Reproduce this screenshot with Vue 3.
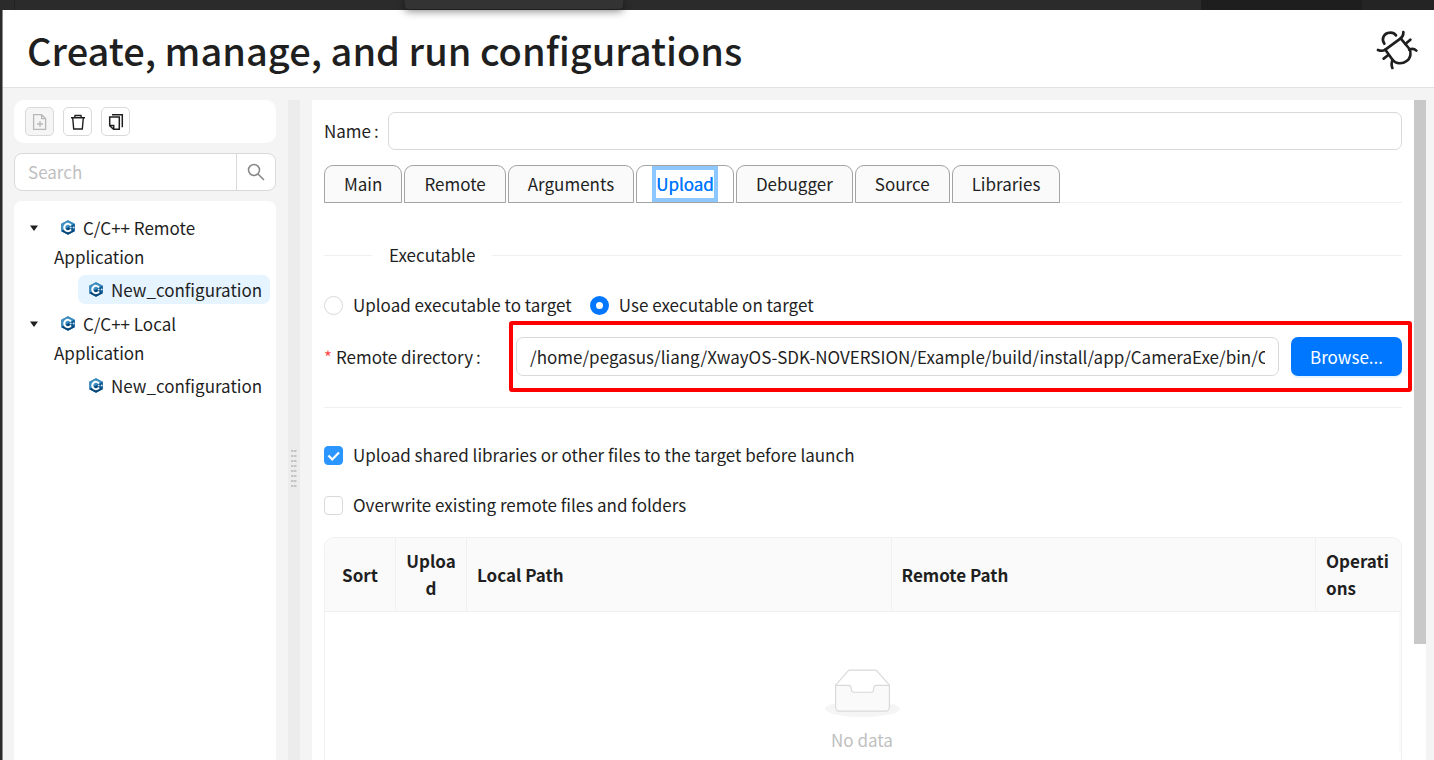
<script setup>
import { ref } from 'vue'

const tabs = ['Main', 'Remote', 'Arguments', 'Upload', 'Debugger', 'Source', 'Libraries']
const activeTab = ref('Upload')
const tree = [
  { label: 'C/C++ Remote Application', child: 'New_configuration', selected: true },
  { label: 'C/C++ Local Application', child: 'New_configuration', selected: false }
]
const search = ref('')
const name = ref('')
const mode = ref('use')
const remoteDir = ref('/home/pegasus/liang/XwayOS-SDK-NOVERSION/Example/build/install/app/CameraExe/bin/CameraExe')
const uploadLibs = ref(true)
const overwrite = ref(false)
</script>

<template>
  <div class="window">
    <div class="strip">
      <span class="strip-left"></span>
      <span class="strip-tab"></span>
      <span class="strip-right"></span>
      <span class="strip-dark"></span>
      <span class="strip-end"></span>
    </div>
    <div class="dialog">
      <header class="header">
        <h1>Create, manage, and run configurations</h1>
        <svg class="bug" viewBox="126 87 126 126" fill="none" stroke="#1f1f1f" stroke-width="8" stroke-linecap="round" stroke-linejoin="round">
          <path d="M151 131C141 118 149 99 168 98Q179 97 186 106" />
          <path d="M154 149L200 115L224 144C233 156 231 174 218 183C205 193 186 192 176 180Z" />
          <path d="M200 115Q209 108 208 96M214 132L229 119M226 149Q238 143 247 152M154 149Q145 155 132 150M163 165L149 176M176 180Q170 190 175 204" />
        </svg>
      </header>

      <div class="body">
        <aside class="sidebar">
          <div class="toolbar">
            <button class="tool" disabled aria-label="New configuration">
              <svg viewBox="0 0 18 18" fill="none" stroke="#b8b8b8" stroke-width="1.3"><path d="M2.6 1.6h8l4 4v10.800h-12zM10.600 1.600v4h4M9 8v6M6 11h6" /></svg>
            </button>
            <button class="tool" aria-label="Delete">
              <svg viewBox="0 0 18 18" fill="none" stroke="#1f1f1f" stroke-width="1.400"><path d="M2 4.700h14M5.600 4.500l.5-2h5.800l.5 2M3.700 5l1 11h8.600l1-11" /></svg>
            </button>
            <button class="tool" aria-label="Duplicate">
              <svg viewBox="0 0 18 18" fill="none" stroke="#1f1f1f" stroke-width="1.500"><path d="M5 1.700h10.300v12.600M2.700 4h9.600v12.300H6.500l-3.800-3.600zM3 12.500h3.700v3.600" /></svg>
            </button>
          </div>

          <div class="search">
            <input v-model="search" type="text" placeholder="Search" aria-label="Search" />
            <button aria-label="Run search">
              <svg viewBox="0 0 18 18" fill="none" stroke="#858585" stroke-width="1.500"><circle cx="7" cy="7" r="5.500" /><path d="M11 11l6 6" /></svg>
            </button>
          </div>

          <ul class="tree">
            <li v-for="node in tree" :key="node.label" class="branch">
              <svg class="caret" viewBox="0 0 8 6"><path d="M0 0.500h8L4 6z" fill="#1f1f1f" /></svg>
              <div class="branch-body">
                <span class="branch-label">
                  <svg class="cpp" viewBox="0 0 42 44"><path d="M21 0L41 11V33L21 44L1 33V11z" fill="#1265a0" /><path d="M21 0L41 11L21 22L1 33V11z" fill="#3f90c2" /><path d="M21 22L41 11V33z" fill="#0e5a94" /><path d="M1 33L21 22L41 33L21 44z" fill="#084878" /><path d="M30 16a11 11 0 1 0 0 12" fill="none" stroke="#fff" stroke-width="6" /><path d="M26 22h6M29 19v6M35 22h6M38 19v6" stroke="#fff" stroke-width="2" /></svg>{{ node.label }}</span>
                <a href="#" class="leaf" :class="{ selected: node.selected }" @click.prevent>
                  <svg class="cpp" viewBox="0 0 42 44"><path d="M21 0L41 11V33L21 44L1 33V11z" fill="#1265a0" /><path d="M21 0L41 11L21 22L1 33V11z" fill="#3f90c2" /><path d="M21 22L41 11V33z" fill="#0e5a94" /><path d="M1 33L21 22L41 33L21 44z" fill="#084878" /><path d="M30 16a11 11 0 1 0 0 12" fill="none" stroke="#fff" stroke-width="6" /><path d="M26 22h6M29 19v6M35 22h6M38 19v6" stroke="#fff" stroke-width="2" /></svg>{{ node.child }}</a>
              </div>
            </li>
          </ul>
        </aside>

        <div class="splitter"><span class="grip"></span></div>

        <main class="panel">
          <div class="content">
            <div class="name-row">
              <label for="name">Name<span class="colon">:</span></label>
              <input id="name" v-model="name" class="field" type="text" />
            </div>

            <div class="tabs" role="tablist">
              <button
                v-for="tab in tabs"
                :key="tab"
                class="tab"
                :class="{ active: tab === activeTab }"
                role="tab"
                :aria-selected="tab === activeTab"
                @click="activeTab = tab"
              ><span>{{ tab }}</span></button>
            </div>

            <div class="section-title"><span>Executable</span></div>

            <div class="options">
              <label class="option"><input v-model="mode" type="radio" name="mode" value="upload" />Upload executable to target</label>
              <label class="option"><input v-model="mode" type="radio" name="mode" value="use" />Use executable on target</label>
            </div>

            <div class="dir-row">
              <label for="remote-dir"><span class="required">*</span>Remote directory<span class="colon">:</span></label>
              <div class="dir-controls">
                <input id="remote-dir" v-model="remoteDir" class="field" type="text" />
                <button class="primary">Browse...</button>
              </div>
            </div>

            <hr />

            <label class="option check"><input v-model="uploadLibs" type="checkbox" /><svg v-if="uploadLibs" class="tick" viewBox="0 0 19 19" fill="none" stroke="#fff" stroke-width="2.200"><path d="M4.500 9.500l3.700 4L15 6.500" /></svg>Upload shared libraries or other files to the target before launch</label>
            <label class="option check"><input v-model="overwrite" type="checkbox" />Overwrite existing remote files and folders</label>

            <div class="table-wrap">
              <table>
                <colgroup><col class="c-small" /><col class="c-small" /><col /><col /><col class="c-ops" /></colgroup>
                <thead>
                  <tr><th class="center">Sort</th><th class="center">Upload</th><th>Local Path</th><th>Remote Path</th><th>Operations</th></tr>
                </thead>
                <tbody>
                  <tr>
                    <td colspan="5">
                      <div class="empty">
                        <svg viewBox="0 0 64 41"><g transform="translate(0 1)" fill="none"><ellipse fill="#f5f5f5" cx="32" cy="33" rx="32" ry="7" /><g stroke="#d9d9d9"><path d="M55 12.760L44.854 1.258C44.367.474 43.656 0 42.907 0H21.093c-.749 0-1.460.474-1.947 1.257L9 12.761V22h46v-9.240z" /><path d="M41.613 15.931c0-1.605.994-2.930 2.227-2.931H55v18.137C55 33.260 53.680 35 52.050 35h-40.100C10.320 35 9 33.259 9 31.137V13h11.160c1.233 0 2.227 1.323 2.227 2.928v.022c0 1.605 1.005 2.901 2.237 2.901h14.752c1.232 0 2.237-1.308 2.237-2.913v-.007z" fill="#fafafa" /></g></g></svg>
                        <span>No data</span>
                      </div>
                    </td>
                  </tr>
                </tbody>
              </table>
            </div>
          </div>
          <div class="scroll"><span></span></div>
        </main>
      </div>
    </div>
  </div>
</template>

<style>
body {
  margin: 0;
  overflow: hidden;
}
</style>

<style scoped>
* {
  box-sizing: border-box;
}
.window {
  height: 100vh;
  display: flex;
  flex-direction: column;
  font-family: "Noto Sans CJK SC", "Noto Sans", sans-serif;
  font-size: 17px;
  line-height: 28px;
  color: #1f1f1f;
  background: #2b2b2b;
}
input,
button {
  font: inherit;
  color: inherit;
  margin: 0;
}
svg {
  display: block;
}
.strip {
  display: flex;
  height: 10px;
  flex: none;
  position: relative;
  z-index: 1;
}
.strip-left {
  width: 28%;
}
.strip-left::before {
  content: "";
  display: block;
  width: 14px;
  height: 100%;
  border-right: 1px solid #222;
}
.strip-tab {
  width: 218px;
  height: 9px;
  margin-left: 3px;
  background: #333;
  border-radius: 0 0 4px 4px;
  box-shadow: 0 2px 8px rgba(0, 0, 0, 0.5);
}
.strip-right {
  flex: 1;
}
.strip-dark {
  width: 161px;
  background: #1e1e1e;
}
.strip-end {
  width: 72px;
  background: #242424;
}
.dialog {
  flex: 1;
  min-height: 0;
  margin-left: 2px;
  border-left: 1px solid #8c8c8c;
  background: #f4f4f4;
  display: flex;
  flex-direction: column;
}
.header {
  flex: none;
  display: flex;
  align-items: center;
  justify-content: space-between;
  height: 78px;
  padding: 2px 16px 0 24px;
  background: #fff;
  border-bottom: 1px solid #e2e2e2;
}
h1 {
  margin: 0;
  font-size: 38px;
  line-height: 60px;
  font-weight: 500;
}
.bug {
  width: 42px;
  height: 42px;
}
.body {
  flex: 1;
  min-height: 0;
  display: flex;
  gap: 12px;
  padding: 12px 8px 0 11px;
}
.sidebar {
  width: 262px;
  flex: none;
  display: flex;
  flex-direction: column;
  gap: 10px;
}
.toolbar {
  display: flex;
  gap: 9px;
  padding: 7px 11px;
  background: #fff;
  border-radius: 10px;
}
.tool {
  width: 29px;
  height: 29px;
  padding: 0;
  display: flex;
  align-items: center;
  justify-content: center;
  background: #fff;
  border: 1px solid #d9d9d9;
  border-radius: 5px;
}
.tool:disabled {
  background: #f5f5f5;
}
.tool svg {
  width: 18px;
  height: 18px;
}
.search {
  display: flex;
  height: 38px;
  background: #fff;
  border: 1px solid #d9d9d9;
  border-radius: 8px;
}
.search input {
  flex: 1;
  min-width: 0;
  border: 0;
  padding: 0 13px;
  background: none;
  outline: none;
}
.search input::placeholder {
  color: #bfbfbf;
}
.search button {
  width: 39px;
  padding: 0;
  display: flex;
  align-items: center;
  justify-content: center;
  background: none;
  border: 0;
  border-left: 1px solid #d9d9d9;
}
.search svg {
  width: 18px;
  height: 18px;
}
.tree {
  flex: 1;
  list-style: none;
  margin: 0;
  padding: 12px 6px 0 16px;
  background: #fff;
  border-radius: 8px 8px 0 0;
  line-height: 29px;
}
.branch {
  display: flex;
  gap: 16px;
  margin-bottom: 5px;
}
.caret {
  width: 8px;
  height: 6px;
  flex: none;
  margin-top: 12px;
}
.branch-body {
  flex: 1;
  min-width: 0;
  display: flex;
  flex-direction: column;
  gap: 4px;
}
.branch-label {
  width: 160px;
}
.cpp {
  display: inline-block;
  width: 14px;
  height: 15px;
  margin: 0 8px 0 7px;
}
.leaf {
  margin-left: 24px;
  padding-left: 4px;
  white-space: nowrap;
  color: inherit;
  text-decoration: none;
  border-radius: 7px;
}
.leaf.selected {
  background: #e6f4ff;
}
.splitter {
  width: 12px;
  flex: none;
  display: flex;
  align-items: center;
  justify-content: center;
  background: #ececec;
  padding-top: 76px;
}
.grip {
  width: 6px;
  height: 37px;
  background:
    repeating-linear-gradient(to bottom, transparent 0 2px, #ececec 2px 5px),
    repeating-linear-gradient(to right, #c4c4c4 0 2px, #dadada 2px 3px);
}
.panel {
  flex: 1;
  min-width: 0;
  display: flex;
  background: #fff;
  overflow: hidden;
}
.content {
  flex: 1;
  min-width: 0;
  padding: 12px 12px 0;
}
.scroll {
  width: 12px;
  flex: none;
}
.scroll span {
  display: block;
  height: 544px;
  max-height: 83%;
  background: #c8c8c8;
}
.field {
  flex: 1;
  min-width: 0;
  height: 38px;
  padding: 0 13px;
  border: 1px solid #d9d9d9;
  border-radius: 7px;
  background: #fff;
  outline: none;
}
.colon {
  margin: 0 9px 0 3px;
}
.name-row {
  display: flex;
  align-items: center;
}
.tabs {
  display: flex;
  gap: 2px;
  margin-top: 15px;
  box-shadow: inset 0 -1px #f0f0f0;
}
.tab {
  height: 38px;
  padding: 0 19px;
  border: 1px solid #a3a3a3;
  border-radius: 9px 9px 0 0;
  background: #fafafa;
}
.tab.active {
  background: #fff;
  color: #0077ff;
  padding: 0 15px;
}
.tab.active span {
  display: block;
  border: 4px solid #8cc8ff;
  text-shadow: 0 0 0 currentColor;
}
.section-title {
  display: flex;
  align-items: center;
  gap: 17px;
  margin-top: 38px;
}
.section-title::before,
.section-title::after {
  content: "";
  width: 48px;
  height: 1px;
  background: #f0f0f0;
}
.section-title::after {
  flex: 1;
}
.options {
  display: flex;
  gap: 18px;
  margin-top: 22px;
}
.option {
  display: flex;
  align-items: center;
  gap: 10px;
}
.option input {
  appearance: none;
  width: 19px;
  height: 19px;
  flex: none;
  border: 1px solid #d9d9d9;
  background: #fff;
}
.option input[type="radio"] {
  border-radius: 50%;
}
.option input[type="radio"]:checked {
  border: 6px solid #0077ff;
}
.option input[type="checkbox"] {
  border-radius: 4px;
}
.option input[type="checkbox"]:checked {
  background: #2b96ff;
  border-color: #2b96ff;
}
.check {
  position: relative;
  margin-bottom: 22px;
}
.tick {
  position: absolute;
  left: 0;
  width: 19px;
  height: 19px;
}
.dir-row {
  display: grid;
  grid-template-columns: 192px 1fr;
  align-items: center;
  margin-top: 18px;
}
.required {
  color: #ff4d4f;
  margin-right: 4px;
}
.dir-controls {
  position: relative;
  display: flex;
  gap: 12px;
}
.dir-controls::after {
  content: "";
  position: absolute;
  inset: -16px -10px -16px -7px;
  border: 4px solid #ff0000;
  border-radius: 3px;
  pointer-events: none;
}
.dir-controls .field,
.primary {
  height: 39px;
}
.primary {
  padding: 0 19px;
  border: 0;
  border-radius: 7px;
  background: #0077ff;
  color: #fff;
  box-shadow: 0 2px 0 rgba(5, 145, 255, 0.1);
}
hr {
  margin: 31px 0 33px;
  border: 0;
  border-top: 1px solid #f0f0f0;
}
.table-wrap {
  margin-top: -4px;
  height: 400px;
  border: 1px solid #f0f0f0;
  border-radius: 10px 10px 0 0;
  overflow: hidden;
}
table {
  width: 100%;
  table-layout: fixed;
  border-collapse: separate;
  border-spacing: 0;
}
.c-small {
  width: 71px;
}
.c-ops {
  width: 85px;
}
th {
  padding: 9px 10px 10px;
  background: #fafafa;
  border-right: 1px solid #f0f0f0;
  border-bottom: 1px solid #f0f0f0;
  line-height: 27px;
  font-weight: 700;
  text-align: left;
  overflow-wrap: anywhere;
}
th:last-child {
  border-right: 0;
}
th.center {
  text-align: center;
}
td {
  padding: 57px 0 0;
  border-right: 2px solid #fafafa;
}
.empty {
  display: flex;
  flex-direction: column;
  align-items: center;
  gap: 9px;
  color: #bfbfbf;
}
.empty svg {
  width: 75px;
  height: 48px;
}
</style>
